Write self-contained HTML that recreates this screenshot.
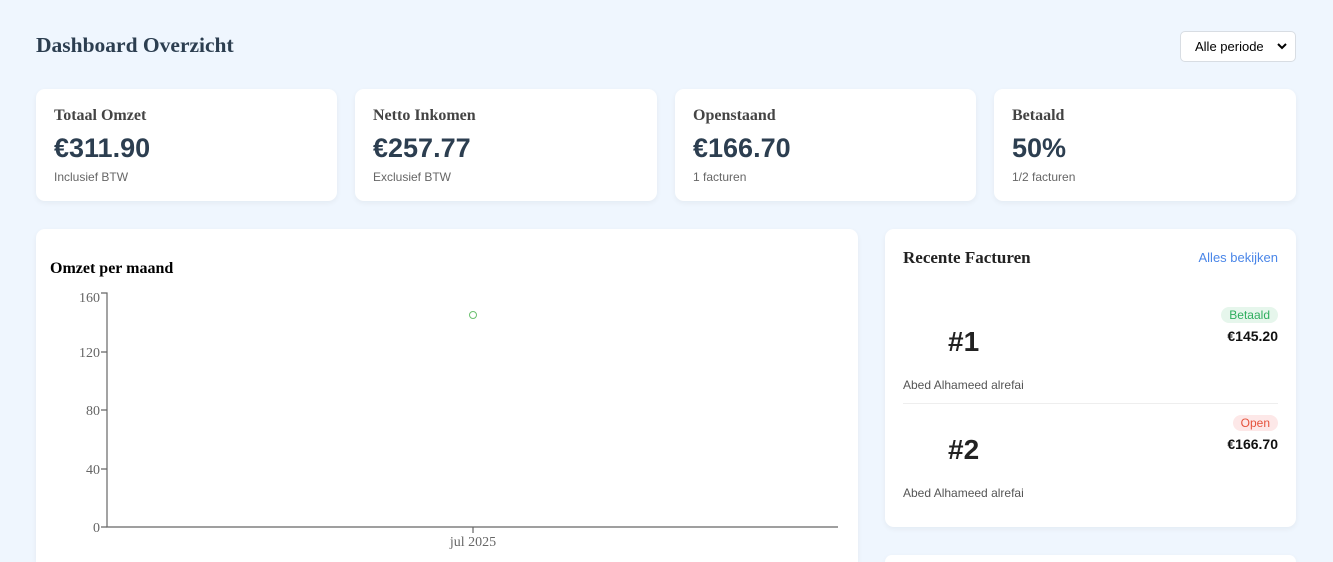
<!DOCTYPE html>
<html style="width:1333px;height:562px;overflow:hidden"><head><meta charset="utf-8"><style>
*{box-sizing:border-box;margin:0;padding:0}
body{width:1333px;height:562px;overflow:hidden;background:#eff6fe;font-family:"Liberation Sans",sans-serif;position:relative}
.card{position:absolute;background:#fff;border-radius:9px;box-shadow:0 2px 6px rgba(0,0,0,0.05)}
h1{position:absolute;left:36px;top:33px;font-family:"Liberation Serif",serif;font-size:21.5px;color:#2c3e50;font-weight:bold}
.sel{position:absolute;left:1180px;top:31px;width:116px;height:31px;border:1px solid #d8dde3;border-radius:5px;background:#fff;font-size:13px;color:#000;padding:7px 0 0 14px}
.sel svg{position:absolute;right:8px;top:11px}
.st h3{position:absolute;left:18px;top:18px;font-family:"Liberation Serif",serif;font-size:16px;color:#444;font-weight:bold}
.st .v{position:absolute;left:18px;top:44px;font-size:27px;color:#2c3e50;font-weight:bold}
.st .s{position:absolute;left:18px;top:81px;font-size:12px;color:#666}
</style></head><body>
<h1>Dashboard Overzicht</h1>
<div class="sel">Alle periode<svg width="10" height="7" viewBox="0 0 10 7"><path d="M1 1l4 4 4-4" stroke="#000" stroke-width="2" fill="none"/></svg></div>

<div class="card st" style="left:36px;top:89px;width:301px;height:112px"><h3>Totaal Omzet</h3><div class="v">€311.90</div><div class="s">Inclusief BTW</div></div>
<div class="card st" style="left:355px;top:89px;width:302px;height:112px"><h3>Netto Inkomen</h3><div class="v">€257.77</div><div class="s">Exclusief BTW</div></div>
<div class="card st" style="left:675px;top:89px;width:301px;height:112px"><h3>Openstaand</h3><div class="v">€166.70</div><div class="s">1 facturen</div></div>
<div class="card st" style="left:994px;top:89px;width:302px;height:112px"><h3>Betaald</h3><div class="v">50%</div><div class="s">1/2 facturen</div></div>

<div class="card" style="left:36px;top:229px;width:822px;height:333px;border-radius:9px 9px 0 0">
<div style="position:absolute;left:14px;top:31px;font-family:'Liberation Serif',serif;font-weight:bold;font-size:16px;color:#000">Omzet per maand</div>
</div>
<svg style="position:absolute;left:0;top:0" width="1333" height="562">
<g stroke="#666" stroke-width="1.2" fill="none">
<path d="M101 293H107V527H838"/>
<path d="M101 352H107M101 410H107M101 469H107M101 527H107M473 527V533"/>
</g>
<g font-family="Liberation Serif,serif" font-size="14" fill="#666" text-anchor="end">
<text x="100" y="302">160</text><text x="100" y="357">120</text><text x="100" y="415">80</text><text x="100" y="474">40</text><text x="100" y="532">0</text>
<text x="473" y="546" text-anchor="middle">jul 2025</text>
</g>
<circle cx="473" cy="315" r="3.5" fill="#fff" stroke="#6cc070" stroke-width="1"/>
</svg>

<div class="card" style="left:885px;top:229px;width:411px;height:298px">
<div style="position:absolute;left:18px;top:19px;font-family:'Liberation Serif',serif;font-weight:bold;font-size:17px;color:#222">Recente Facturen</div>
<div style="position:absolute;right:18px;top:21px;font-size:13px;color:#4a86e8">Alles bekijken</div>
<div style="position:absolute;left:63px;top:97px;font-size:28px;font-weight:bold;color:#222">#1</div>
<div style="position:absolute;right:18px;top:78px;font-size:12px;color:#2fae5f;background:#e6f6ec;border-radius:9px;padding:1px 8px">Betaald</div>
<div style="position:absolute;right:18px;top:99px;font-size:14px;font-weight:bold;color:#111">€145.20</div>
<div style="position:absolute;left:18px;top:149px;font-size:12px;color:#555">Abed Alhameed alrefai</div>
<div style="position:absolute;left:18px;right:18px;top:174px;border-top:1px solid #eee"></div>
<div style="position:absolute;left:63px;top:205px;font-size:28px;font-weight:bold;color:#222">#2</div>
<div style="position:absolute;right:18px;top:186px;font-size:12px;color:#e5533d;background:#fde8e8;border-radius:9px;padding:1px 8px">Open</div>
<div style="position:absolute;right:18px;top:207px;font-size:14px;font-weight:bold;color:#111">€166.70</div>
<div style="position:absolute;left:18px;top:257px;font-size:12px;color:#555">Abed Alhameed alrefai</div>
</div>
<div class="card" style="left:885px;top:555px;width:411px;height:7px;border-radius:9px 9px 0 0"></div>
</body></html>
